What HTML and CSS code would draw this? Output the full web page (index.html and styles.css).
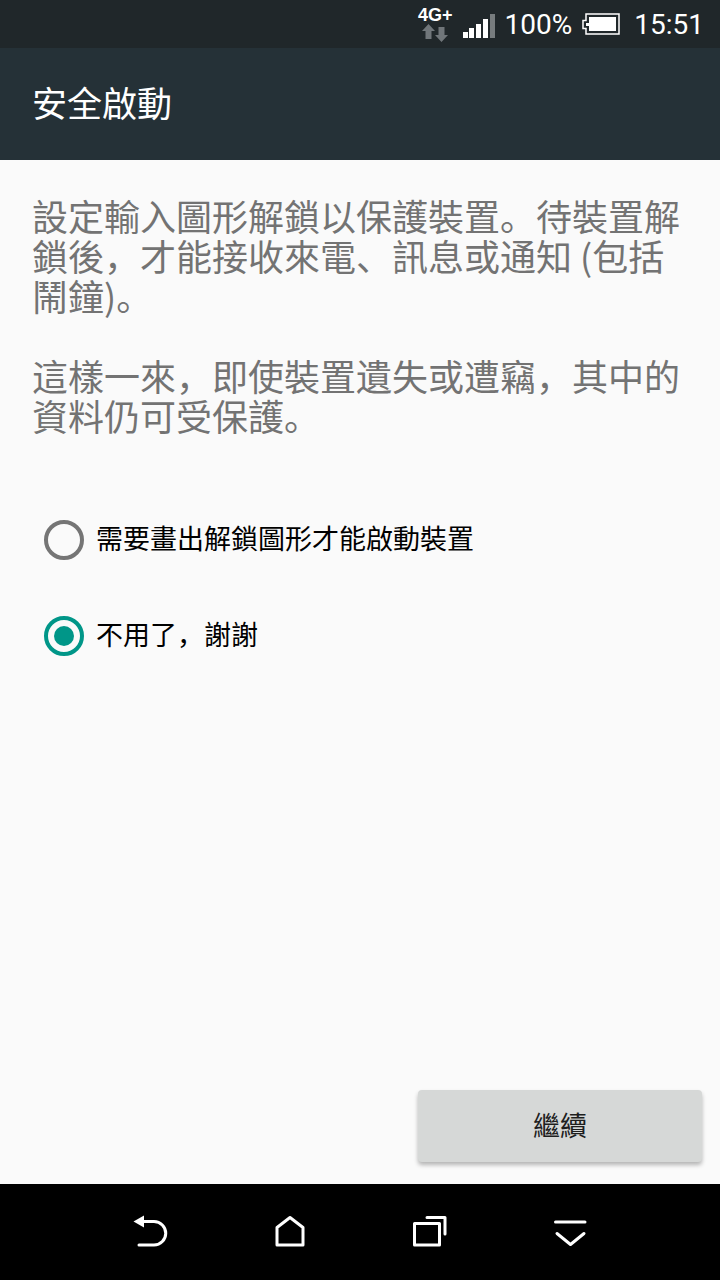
FILE: index.html
```html
<!DOCTYPE html>
<html lang="zh-Hant">
<head>
    <meta charset="UTF-8">
    <meta name="viewport" content="width=device-width, initial-scale=1.0">
    <title>安全啟動</title>
    <link rel="stylesheet" href="styles.css">
</head>
<body>
    <div class="status-bar">
        <div class="network">
            <span class="network-type">4G+</span>
            <svg class="network-arrows" width="26" height="18" viewBox="0 0 26 18" aria-hidden="true">
                <path d="M6.5 0 L13 7 H9.5 V15 H3.5 V7 H0 Z"/>
                <path d="M16.5 3 H22.5 V11 H26 L19.5 18 L13 11 H16.5 Z"/>
            </svg>
        </div>
        <svg class="signal" width="32" height="24" viewBox="0 0 32 24" aria-hidden="true">
            <rect x="0" y="18" width="5" height="6"/>
            <rect x="6" y="14" width="5" height="10"/>
            <rect x="13" y="10" width="5" height="14"/>
            <rect x="20" y="5" width="5" height="19"/>
            <rect class="signal-off" x="27" y="0" width="5" height="24"/>
        </svg>
        <span>100%</span>
        <svg class="battery" width="38" height="22" viewBox="0 0 38 22" aria-hidden="true">
            <path class="battery-case" d="M4 1 H37 V21 H4 V15.5 H1 V7.5 H4 Z"/>
            <path class="battery-level" d="M7 4 H34 V18 H7 V13 H4 V10 H7 Z"/>
        </svg>
        <span class="clock">15:51</span>
    </div>

    <header class="header">
        <h1>安全啟動</h1>
    </header>

    <main class="content">
        <div class="description">
            <p>設定輸入圖形解鎖以保護裝置。待裝置解鎖後，才能接收來電、訊息或通知 (包括鬧鐘)。</p>
            <p>這樣一來，即使裝置遺失或遭竊，其中的資料仍可受保護。</p>
        </div>

        <form class="options" id="startForm">
            <label class="option">
                <input type="radio" name="secure" value="yes">
                <span class="option-text">需要畫出解鎖圖形才能啟動裝置</span>
            </label>
            <label class="option">
                <input type="radio" name="secure" value="no" checked>
                <span class="option-text">不用了，謝謝</span>
            </label>
        </form>
    </main>

    <div class="actions">
        <button class="continue" type="button">繼續</button>
    </div>

    <nav class="nav-bar">
        <button type="button" aria-label="返回">
            <svg width="40" height="40" viewBox="0 0 40 40">
                <path d="M14 7.5 H24 A11.5 11.5 0 0 1 24 31 H9"/>
                <path class="solid" d="M3.5 7.5 L14 1.5 V13.5 Z"/>
            </svg>
        </button>
        <button type="button" aria-label="主畫面">
            <svg width="40" height="40" viewBox="0 0 40 40">
                <path d="M20 3.5 L33 13.5 V31 H7 V13.5 Z"/>
            </svg>
        </button>
        <button type="button" aria-label="最近使用">
            <svg width="40" height="40" viewBox="0 0 40 40">
                <rect x="4.5" y="9.5" width="25" height="21.5"/>
                <path d="M17 3.5 H35 V20"/>
            </svg>
        </button>
        <button type="button" aria-label="隱藏">
            <svg width="40" height="40" viewBox="0 0 40 40">
                <path d="M5.5 8 H35"/>
                <path d="M7 19.5 L20.5 30.5 L34 19.5"/>
            </svg>
        </button>
    </nav>
</body>
</html>
```

FILE: styles.css
```css
* {
    box-sizing: border-box;
}

body {
    margin: 0;
    min-height: 100vh;
    display: flex;
    flex-direction: column;
    font-family: "Noto Sans CJK SC", sans-serif;
    /* keeps the punctuation at the lower left of its cell */
    font-feature-settings: "locl" 0;
    background-color: #fafafa;
    color: #000;
}

.status-bar {
    display: flex;
    justify-content: flex-end;
    align-items: center;
    gap: 10px;
    height: 48px;
    padding: 0 16px;
    background-color: #20272a;
    color: #fff;
    font-family: Roboto, sans-serif;
    font-size: 28px;
}

.network {
    display: flex;
    flex-direction: column;
    align-items: center;
}

.network-type {
    font-family: "Liberation Sans", sans-serif;
    font-size: 18px;
    font-weight: bold;
    line-height: 18px;
}

.network-arrows {
    fill: #70767a;
}

.signal {
    fill: #fff;
    margin-top: 4px;
}

.signal-off {
    fill: #777c7e;
}

.battery-case {
    fill: none;
    stroke: #fff;
    stroke-width: 1.5;
}

.battery-level {
    fill: #fff;
}

.clock {
    margin-left: 4px;
}

.header {
    display: flex;
    align-items: center;
    height: 112px;
    padding: 0 32px 4px;
    background-color: #253137;
    color: #fff;
}

.header h1 {
    margin: 0;
    font-size: 35px;
    font-weight: normal;
    line-height: 40px;
}

.content {
    flex: 1;
}

.description {
    padding: 35px 32px 0;
    font-size: 36px;
    line-height: 40px;
    color: #737373;
}

.description p {
    margin: 0 0 40px;
}

.options {
    padding: 17px 44px;
}

.option {
    display: flex;
    align-items: center;
    gap: 12px;
    height: 96px;
    font-size: 27px;
    line-height: 40px;
}

.option-text {
    padding-bottom: 4px;
}

.option input {
    appearance: none;
    flex: none;
    width: 40px;
    height: 40px;
    margin: 0;
    padding: 6px;
    border: 4px solid #757575;
    border-radius: 50%;
}

.option input:checked {
    border-color: #009688;
}

.option input:checked::before {
    content: "";
    display: block;
    height: 20px;
    border-radius: 50%;
    background-color: #009688;
}

.actions {
    display: flex;
    justify-content: flex-end;
    padding: 0 18px 22px;
}

.continue {
    min-width: 284px;
    height: 72px;
    padding: 0 0 4px;
    border: none;
    border-radius: 4px;
    background-color: #d6d8d7;
    color: #1e1e1e;
    font-family: inherit;
    font-size: 27px;
    box-shadow: 0 3px 4px rgba(0, 0, 0, 0.28);
}

.nav-bar {
    display: flex;
    height: 96px;
    padding: 4px 80px 0;
    background-color: #000;
}

.nav-bar button {
    flex: 1;
    display: flex;
    justify-content: center;
    align-items: center;
    padding: 0;
    border: none;
    background: none;
}

.nav-bar svg {
    fill: none;
    stroke: #fff;
    stroke-width: 3;
    stroke-linecap: round;
    stroke-linejoin: round;
}

.nav-bar .solid {
    fill: #fff;
    stroke: none;
}
```
